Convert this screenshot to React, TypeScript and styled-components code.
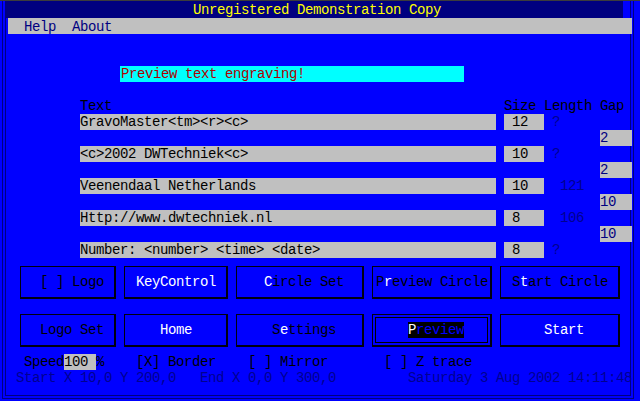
import React from "react";
import styled, { createGlobalStyle } from "styled-components";

const Global = createGlobalStyle`
  html, body { margin: 0; padding: 0; background: #0000ff; }
  body { font-family: "Liberation Mono", "DejaVu Sans Mono", monospace; }
`;

const Screen = styled.div`
  position: relative;
  width: 640px;
  height: 401px;
  box-sizing: border-box;
  background: #0000ff;
  border-top: 1px solid #3c3c3c;
  font-family: "Liberation Mono", "DejaVu Sans Mono", monospace;
  font-size: 14px;
  letter-spacing: -0.4px;
  line-height: 16px;
  overflow: hidden;
  display: flex;
  flex-direction: column;
  &::before {
    content: "";
    position: absolute;
    left: 2px;
    right: 6px;
    top: -1px;
    bottom: 2px;
    border: 4px double #000080;
    border-top: none;
    pointer-events: none;
  }
`;

const TitleBar = styled.div`
  position: relative;
  height: 17px;
  margin: 0 17px 0 5px;
  padding-left: 188px;
  background: #000080;
  color: #ffff00;
  line-height: 18px;
  white-space: pre;
`;

const MenuBar = styled.div`
  position: relative;
  height: 16px;
  margin: 0 8px;
  padding-left: 16px;
  background: #c0c0c0;
  color: #000080;
  line-height: 18px;
  white-space: pre;
`;

const Line = styled.div<{ $col: number; $top?: number; $color?: string }>`
  position: relative;
  height: 16px;
  margin-top: ${(p) => p.$top ?? 0}px;
  padding-left: ${(p) => p.$col * 8}px;
  color: ${(p) => p.$color ?? "#000000"};
  white-space: pre;
  display: flex;
`;

const PreviewBox = styled.div`
  width: 343px;
  height: 16px;
  padding-left: 1px;
  background: #00ffff;
  color: #b00000;
`;

const Table = styled.div`
  position: relative;
  margin-top: 16px;
  padding-left: 80px;
  display: grid;
  grid-template-columns: 416px 8px 40px 56px 32px;
  grid-template-rows: repeat(10, 16px);
  white-space: pre;
`;

const Head = styled.div<{ $c: number }>`
  grid-column: ${(p) => p.$c};
  grid-row: 1;
  color: #000000;
`;

const Field = styled.div<{ $c: number; $r: number; $color?: string }>`
  grid-column: ${(p) => p.$c};
  grid-row: ${(p) => p.$r};
  background: #c0c0c0;
  color: ${(p) => p.$color ?? "#000000"};
  overflow: hidden;
`;

const Dim = styled.div<{ $r: number }>`
  grid-column: 4;
  grid-row: ${(p) => p.$r};
  color: #000090;
`;

const ButtonGrid = styled.div`
  position: relative;
  margin-top: 8px;
  padding-left: 20px;
  display: grid;
  grid-template-columns: 96px 104px 128px 120px 120px;
  grid-auto-rows: 33px;
  column-gap: 8px;
  row-gap: 15px;
`;

const Button = styled.div<{ $indent: number; $focus?: boolean }>`
  box-sizing: border-box;
  border: 1px solid #000010;
  border-right-width: 2px;
  border-bottom-width: 2px;
  padding-left: ${(p) => p.$indent - 1}px;
  display: flex;
  align-items: center;
  white-space: pre;
  color: #000000;
  box-shadow: ${(p) =>
    p.$focus ? "inset 0 0 0 2px #0000ff, inset 0 0 0 3px #000000" : "none"};
`;

const Label = styled.span<{ $light?: boolean }>`
  height: 16px;
  color: ${(p) => (p.$light ? "#ffffff" : "#000000")};
`;

const Hot = styled.span`
  color: #ffffff;
`;

const Focused = styled.span`
  height: 16px;
  background: #000000;
  color: #0000ff;
`;

const SpeedBox = styled.span`
  background: #c0c0c0;
  color: #000000;
`;

const rows = [
  { text: "GravoMaster<tm><r><c>", size: " 12", len: " ?", gap: "2" },
  { text: "<c>2002 DWTechniek<c>", size: " 10", len: " ?", gap: "2" },
  { text: "Veenendaal Netherlands", size: " 10", len: "  121", gap: "10" },
  { text: "Http://www.dwtechniek.nl", size: " 8", len: "  106", gap: "10" },
  { text: "Number: <number> <time> <date>", size: " 8", len: " ?", gap: null },
];

export default function App() {
  return (
    <>
      <Global />
      <Screen>
        <TitleBar>Unregistered Demonstration Copy</TitleBar>
        <MenuBar>{"Help  About"}</MenuBar>
        <Line $col={15} $top={32}>
          <PreviewBox>Preview text engraving!</PreviewBox>
        </Line>
        <Table>
          <Head $c={1}>Text</Head>
          <Head $c={3}>Size</Head>
          <Head $c={4}>Length</Head>
          <Head $c={5}>Gap</Head>
          {rows.map((r, i) => (
            <React.Fragment key={i}>
              <Field $c={1} $r={2 + i * 2}>
                {r.text}
              </Field>
              <Field $c={3} $r={2 + i * 2}>
                {r.size}
              </Field>
              <Dim $r={2 + i * 2}>{r.len}</Dim>
              {r.gap !== null && (
                <Field $c={5} $r={3 + i * 2} $color="#000080">
                  {r.gap}
                </Field>
              )}
            </React.Fragment>
          ))}
        </Table>
        <ButtonGrid>
          <Button $indent={20}>
            <Label>[ ] Logo</Label>
          </Button>
          <Button $indent={12}>
            <Label $light>KeyControl</Label>
          </Button>
          <Button $indent={28}>
            <Label>
              <Hot>C</Hot>ircle Set
            </Label>
          </Button>
          <Button $indent={4}>
            <Label>
              P<Hot>r</Hot>eview Circle
            </Label>
          </Button>
          <Button $indent={12}>
            <Label>
              S<Hot>t</Hot>art Circle
            </Label>
          </Button>
          <Button $indent={20}>
            <Label>Logo Set</Label>
          </Button>
          <Button $indent={36}>
            <Label $light>Home</Label>
          </Button>
          <Button $indent={36}>
            <Label>
              S<Hot>e</Hot>ttings
            </Label>
          </Button>
          <Button $indent={36} $focus>
            <Focused>
              <Hot>P</Hot>review
            </Focused>
          </Button>
          <Button $indent={44}>
            <Label $light>Start</Label>
          </Button>
        </ButtonGrid>
        <Line $col={3} $top={7}>
          {"Speed"}
          <SpeedBox>{"100 "}</SpeedBox>
          {"%    [X] Border    [ ] Mirror       [ ] Z trace"}
        </Line>
        <Line $col={2} $color="#000090">
          {"Start X 10,0 Y 200,0   End X 0,0 Y 300,0         Saturday 3 Aug 2002 14:11:48"}
        </Line>
      </Screen>
    </>
  );
}
